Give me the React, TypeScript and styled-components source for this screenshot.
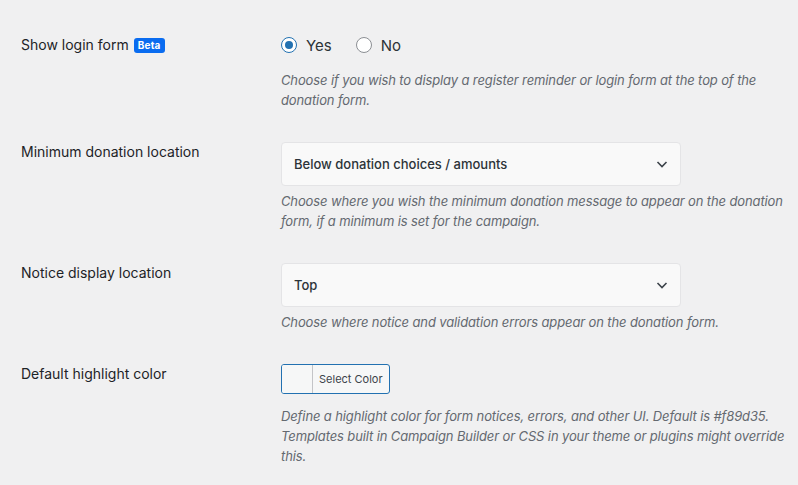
import React, { useState } from 'react';
import styled, { createGlobalStyle } from 'styled-components';

const GlobalStyle = createGlobalStyle`
  html, body {
    margin: 0;
    padding: 0;
    background: #f0f0f1;
  }
  body {
    font-family: Inter, "Noto Sans", "Liberation Sans", sans-serif;
    color: #1d2327;
  }
`;

const Page = styled.div`
  padding: 19px 0 0 21px;
  width: 798px;
  height: 485px;
  box-sizing: border-box;
  overflow: hidden;
`;

const Row = styled.div`
  display: grid;
  grid-template-columns: 260px 1fr;
  padding: 16px 0;
`;

const Label = styled.div`
  font-size: 14px;
  line-height: 20px;
  display: flex;
  align-items: center;
  gap: 5px;
  height: 20px;
`;

const Badge = styled.span`
  background: #0a6cf0;
  color: #fff;
  font-size: 10px;
  font-weight: 700;
  line-height: 15px;
  padding: 0 4px;
  border-radius: 3px;
  letter-spacing: 0.2px;
`;

const Field = styled.div`
  display: flex;
  flex-direction: column;
`;

const RadioGroup = styled.div`
  display: flex;
  align-items: center;
  gap: 24px;
  height: 20px;
`;

const RadioLabel = styled.label`
  display: flex;
  align-items: center;
  gap: 9px;
  font-size: 15px;
  color: #2c3338;
  cursor: pointer;
`;

const RadioDot = styled.span<{ checked: boolean }>`
  width: 16px;
  height: 16px;
  box-sizing: border-box;
  border-radius: 50%;
  border: 1px solid ${p => (p.checked ? '#2271b1' : '#8c8f94')};
  background: #fff;
  display: flex;
  align-items: center;
  justify-content: center;

  &::after {
    content: '';
    width: 8px;
    height: 8px;
    border-radius: 50%;
    background: #2271b1;
    display: ${p => (p.checked ? 'block' : 'none')};
  }
`;

const Description = styled.p<{ gap?: number }>`
  margin: ${p => p.gap ?? 5}px 0 0;
  font-size: 13px;
  line-height: 20px;
  font-style: italic;
  letter-spacing: -0.12px;
  color: #646970;
  max-width: 512px;
`;

const SelectBox = styled.div`
  width: 400px;
  height: 44px;
  box-sizing: border-box;
  background: #f9f9f9;
  border: 1px solid #e4e4e6;
  border-radius: 4px;
  display: flex;
  align-items: center;
  justify-content: space-between;
  padding: 0 10px 0 12px;
  font-size: 13px;
  font-weight: 500;
  color: #2c3338;
`;

const ColorButton = styled.button`
  display: flex;
  align-items: stretch;
  height: 30px;
  width: 109px;
  padding: 0;
  box-sizing: border-box;
  border: 1px solid #2271b1;
  border-radius: 3px;
  background: #f6f7f7;
  overflow: hidden;
  cursor: pointer;
  font-family: inherit;
`;

const Swatch = styled.span`
  width: 30px;
  background: #f6f7f7;
  border-right: 1px solid #c3c4c7;
`;

const ButtonText = styled.span`
  flex: 1;
  display: flex;
  align-items: center;
  padding-left: 6px;
  font-size: 11px;
  color: #3c434a;
`;

const Chevron = () => (
  <svg width="16" height="16" viewBox="0 0 16 16" fill="none">
    <path d="M3.5 6l4.5 4.5L12.5 6" stroke="#3c434a" strokeWidth="1.6" />
  </svg>
);

export default function App() {
  const [login, setLogin] = useState('yes');

  return (
    <Page>
      <GlobalStyle />
      <Row>
        <Label>
          Show login form <Badge>Beta</Badge>
        </Label>
        <Field>
          <RadioGroup>
            <RadioLabel onClick={() => setLogin('yes')}>
              <RadioDot checked={login === 'yes'} />
              Yes
            </RadioLabel>
            <RadioLabel onClick={() => setLogin('no')}>
              <RadioDot checked={login === 'no'} />
              No
            </RadioLabel>
          </RadioGroup>
          <Description gap={15}>
            Choose if you wish to display a register reminder or login form at the top of the donation form.
          </Description>
        </Field>
      </Row>

      <Row>
        <Label>Minimum donation location</Label>
        <Field>
          <SelectBox>
            Below donation choices / amounts
            <Chevron />
          </SelectBox>
          <Description>
            Choose where you wish the minimum donation message to appear on the donation form, if a minimum is set for the campaign.
          </Description>
        </Field>
      </Row>

      <Row>
        <Label>Notice display location</Label>
        <Field>
          <SelectBox>
            Top
            <Chevron />
          </SelectBox>
          <Description>Choose where notice and validation errors appear on the donation form.</Description>
        </Field>
      </Row>

      <Row>
        <Label>Default highlight color</Label>
        <Field>
          <ColorButton>
            <Swatch />
            <ButtonText>Select Color</ButtonText>
          </ColorButton>
          <Description gap={12}>
            Define a highlight color for form notices, errors, and other UI. Default is #f89d35. Templates built in Campaign Builder or CSS in your theme or plugins might override this.
          </Description>
        </Field>
      </Row>
    </Page>
  );
}
